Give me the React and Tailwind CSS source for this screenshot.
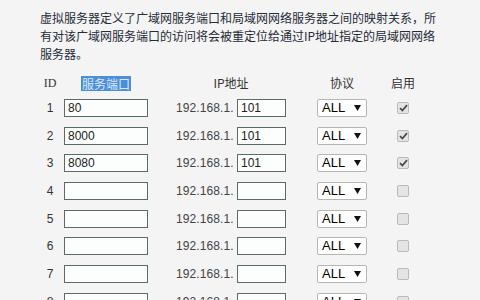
import React from "react";

const rows = [
  { id: 1, port: "80", ip: "101", on: true },
  { id: 2, port: "8000", ip: "101", on: true },
  { id: 3, port: "8080", ip: "101", on: true },
  { id: 4, port: "", ip: "", on: false },
  { id: 5, port: "", ip: "", on: false },
  { id: 6, port: "", ip: "", on: false },
  { id: 7, port: "", ip: "", on: false },
  { id: 8, port: "", ip: "", on: false },
];

const cjk = { fontFamily: '"Noto Sans CJK SC", "Noto Sans", sans-serif' };
const lat = { fontFamily: '"Liberation Sans", Arial, sans-serif' };

function Check({ on }) {
  return (
    <div className="w-[12px] h-[12px] rounded-[2px] border border-[#b9b9b9] bg-[#e4e4e4] flex items-center justify-center">
      {on && (
        <svg width="9" height="8" viewBox="0 0 9 8">
          <path d="M1 4.2 L3.4 6.5 L8 1.2" fill="none" stroke="#4a4a4a" strokeWidth="1.8" />
        </svg>
      )}
    </div>
  );
}

export default function App() {
  return (
    <div className="w-[480px] h-[300px] overflow-hidden bg-[#f4f4f4] text-[#333]" style={cjk}>
      <div className="pl-[40px] pt-[9px] text-[12px] leading-[18px] whitespace-nowrap text-[#262b38]">
        虚拟服务器定义了广域网服务端口和局域网网络服务器之间的映射关系，所
        <br />
        有对该广域网服务端口的访问将会被重定位给通过IP地址指定的局域网网络
        <br />
        服务器。
      </div>

      <div className="mt-[11px] flex items-center h-[18px] text-[12px] text-[#333]">
        <div className="ml-[36px] w-[28px] text-center" style={{ fontFamily: '"Liberation Serif", serif' }}>ID</div>
        <div className="w-[84px] flex justify-center">
          <span className="px-[1px] h-[15px] leading-[15px] bg-[#4a8fd8] text-[#dbe8f6]">服务端口</span>
        </div>
        <div className="ml-[28px] w-[110px] text-center">IP地址</div>
        <div className="ml-[31px] w-[50px] text-center">协议</div>
        <div className="ml-[18px] w-[36px] text-center">启用</div>
      </div>

      <div className="mt-[7px] flex flex-col gap-[9.7px]">
        {rows.map((r) => (
          <div key={r.id} className="flex items-center h-[18px] text-[12px]" style={lat}>
            <div className="ml-[36px] w-[28px] text-center text-[#333]">{r.id}</div>
            <div className="w-[84px] h-[18px] border border-[#5f6966] bg-[#fcfefd] pl-[3px] leading-[16px] text-[#222]">
              {r.port}
            </div>
            <div className="ml-[28px] w-[110px] flex items-center">
              <span className="w-[61px] tracking-[0.1px] text-[#444]">192.168.1.</span>
              <div className="w-[49px] h-[18px] border border-[#5f6966] bg-[#fcfefd] pl-[3px] leading-[16px] text-[#222]">
                {r.ip}
              </div>
            </div>
            <div className="ml-[31px] w-[50px] h-[18px] border border-[#b5b5b5] rounded-[2px] bg-white flex items-center justify-between pl-[4px] pr-[5px]">
              <span className="text-[13px] text-black leading-[16px]">ALL</span>
              <svg width="7" height="6" viewBox="0 0 7 6">
                <path d="M0 0 H7 L3.5 6 Z" fill="#111" />
              </svg>
            </div>
            <div className="ml-[30px]">
              <Check on={r.on} />
            </div>
          </div>
        ))}
      </div>
    </div>
  );
}
